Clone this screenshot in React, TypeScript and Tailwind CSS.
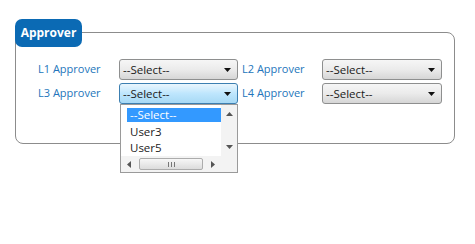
import React from 'react';

const FONT = "font-['Open_Sans','Liberation_Sans',sans-serif]";

interface FakeSelectProps {
  value: string;
  focused?: boolean;
  width: string;
  children?: React.ReactNode;
}

const Caret = () => (
  <svg width="7" height="4" viewBox="0 0 7 4" className="shrink-0">
    <path d="M0 0 H7 L3.5 4 Z" fill="#111" />
  </svg>
);

const FakeSelect: React.FC<FakeSelectProps> = ({ value, focused = false, width, children }) => (
  <div className={`relative ${width} h-[21px]`}>
    <div
      className={`flex h-full items-center justify-between rounded-[3px] border pl-[3px] pr-[6px] text-[11.5px] text-[#1a1a1a] ${
        focused
          ? 'border-[#3c7fb1] bg-gradient-to-b from-[#eaf6fd] via-[#bee6fd] to-[#a7d9f5]'
          : 'border-[#8e8f8f] bg-gradient-to-b from-[#f6f6f6] via-[#ebebeb] to-[#d6d6d6]'
      }`}
    >
      <span className="leading-none">{value}</span>
      <Caret />
    </div>
    {children}
  </div>
);

const ArrowTri = ({ dir }: { dir: 'up' | 'down' | 'left' | 'right' }) => {
  const d = {
    up: 'M0 4 L3.5 0 L7 4 Z',
    down: 'M0 0 H7 L3.5 4 Z',
    left: 'M4 0 V7 L0 3.5 Z',
    right: 'M0 0 V7 L4 3.5 Z',
  }[dir];
  const vertical = dir === 'up' || dir === 'down';
  return (
    <svg width={vertical ? 7 : 4} height={vertical ? 4 : 7} viewBox={vertical ? '0 0 7 4' : '0 0 4 7'}>
      <path d={d} fill="#555" />
    </svg>
  );
};

const DropList = () => (
  <div className="absolute left-[1px] top-full z-10 flex h-[69px] w-[118px] flex-col border border-[#9a9a9a] bg-white">
    <div className="flex min-h-0 flex-1">
      <div className="flex flex-1 flex-col pl-[6px] pt-[3px] text-[11.5px] text-[#222]">
        <div className="flex h-[14px] items-center bg-[#3399ff] pl-[3px] text-white">--Select--</div>
        <div className="mt-[2px] flex h-[16px] items-center pl-[3px]">User3</div>
        <div className="flex h-[16px] items-center pl-[3px]">User5</div>
      </div>
      <div className="flex w-[16px] flex-col items-center justify-between bg-[#f3f3f3] py-[7px]">
        <ArrowTri dir="up" />
        <ArrowTri dir="down" />
      </div>
    </div>
    <div className="flex h-[16px] items-center bg-[#f3f3f3]">
      <div className="flex w-[16px] justify-center">
        <ArrowTri dir="left" />
      </div>
      <div className="mx-[2px] flex h-[12px] flex-1 items-center justify-center rounded-[2px] border border-[#acacac] bg-gradient-to-b from-[#f7f7f7] to-[#dcdcdc]">
        <div className="flex gap-[2px]">
          <div className="h-[5px] w-px bg-[#777]" />
          <div className="h-[5px] w-px bg-[#777]" />
          <div className="h-[5px] w-px bg-[#777]" />
        </div>
      </div>
      <div className="flex w-[16px] justify-center">
        <ArrowTri dir="right" />
      </div>
      <div className="w-[16px]" />
    </div>
  </div>
);

const Label = ({ text, width }: { text: string; width: string }) => (
  <div className={`${width} text-[11px] text-[#2375bb]`}>{text}</div>
);

export default function App() {
  return (
    <div className={`h-[244px] w-[475px] bg-white pl-[15px] pt-[32px] ${FONT}`}>
      <div className="relative h-[112px] w-[440px] rounded-[8px] border border-[#8c8c8c] pl-[22px] pt-[26px]">
        <div className="absolute -left-px -top-[14px] flex h-[28px] w-[67px] items-center justify-center rounded-[7px] bg-[#0b6ab4] text-[12px] font-bold text-white">
          Approver
        </div>
        <div className="flex flex-col gap-[3px]">
          <div className="flex items-center">
            <Label text="L1 Approver" width="w-[81px]" />
            <FakeSelect value="--Select--" width="w-[119px]" />
            <div className="w-[4px]" />
            <Label text="L2 Approver" width="w-[80px]" />
            <FakeSelect value="--Select--" width="w-[120px]" />
          </div>
          <div className="flex items-center">
            <Label text="L3 Approver" width="w-[81px]" />
            <FakeSelect value="--Select--" width="w-[119px]" focused>
              <DropList />
            </FakeSelect>
            <div className="w-[4px]" />
            <Label text="L4 Approver" width="w-[80px]" />
            <FakeSelect value="--Select--" width="w-[120px]" />
          </div>
        </div>
      </div>
    </div>
  );
}
